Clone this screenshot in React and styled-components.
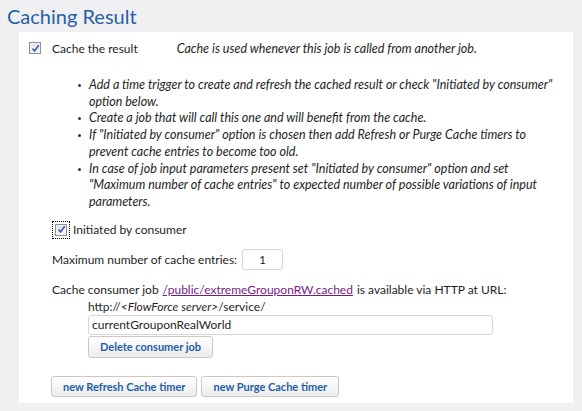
import React from "react";
import styled, { createGlobalStyle } from "styled-components";

const GlobalStyle = createGlobalStyle`
  html, body {
    margin: 0;
    padding: 0;
    background: #f0f0f2;
  }
  body {
    font-family: Lato, "Open Sans", sans-serif;
    font-size: 12px;
    color: #1e1e1e;
  }
`;

const Page = styled.div`
  width: 582px;
  height: 411px;
  padding: 0 9px 0 7px;
  box-sizing: border-box;
`;

const Title = styled.h2`
  margin: 0;
  padding-top: 3px;
  height: 29px;
  font-size: 20px;
  font-weight: 400;
  color: #2860a6;
  line-height: 26px;
`;

const Panel = styled.div`
  margin-left: 12px;
  background: #fff;
  height: 371px;
  box-sizing: border-box;
  padding: 9px 0 0 10px;
`;

const Row = styled.div`
  display: flex;
  align-items: center;
  height: ${(p) => p.h || 18}px;
  margin-left: ${(p) => p.indent || 0}px;
  margin-top: ${(p) => p.top || 0}px;
`;

const Box = styled.span`
  display: inline-flex;
  align-items: center;
  justify-content: center;
  width: 10px;
  height: 10px;
  border: 1px solid #8e8f8f;
  background: linear-gradient(#e2e2e2, #fafafa);
  box-shadow: inset 0 0 0 1px #f4f4f4;
  outline: ${(p) => (p.focused ? "1px dotted #000" : "none")};
  outline-offset: 2px;
  flex-shrink: 0;
`;

const Label = styled.span`
  margin-left: ${(p) => p.gap || 11}px;
`;

const Hint = styled.span`
  font-style: italic;
  font-size: 12.5px;
  margin-left: 39px;
`;

const List = styled.ul`
  margin: 22px 0 0 0;
  padding: 0 0 0 60px;
  width: 470px;
  font-style: italic;
  font-size: 12.5px;
  line-height: 16.7px;
  list-style: none;
`;

const Item = styled.li`
  position: relative;
  &::before {
    content: "";
    position: absolute;
    left: -11px;
    top: 7px;
    width: 3px;
    height: 3px;
    border-radius: 50%;
    background: #333;
  }
`;

const NumberField = styled.span`
  display: inline-flex;
  align-items: center;
  justify-content: center;
  width: 39px;
  height: 19px;
  margin-left: 5px;
  border: 1px solid #d6d6d6;
  border-radius: 3px;
`;

const Link = styled.a`
  color: #7b1a86;
  text-decoration: underline;
  margin: 0 4px;
`;

const Indented = styled.div`
  margin-left: 59px;
  line-height: 16px;
`;

const TextField = styled.div`
  width: 405px;
  height: 20px;
  border: 1px solid #d6d6d6;
  border-radius: 3px;
  display: flex;
  align-items: center;
  padding-left: 3px;
  box-sizing: border-box;
`;

const Button = styled.button`
  display: block;
  font-family: Lato, "Open Sans", sans-serif;
  font-size: 11px;
  font-weight: 700;
  color: #1f5ea8;
  height: ${(p) => p.h || 21}px;
  padding: 0 11px;
  margin-top: ${(p) => p.top || 0}px;
  border: 1px solid #c9c9c9;
  border-radius: 3px;
  background: linear-gradient(#ffffff, #ececec);
  margin-right: 4px;
`;

const Buttons = styled.div`
  display: flex;
  margin-top: 18px;
  margin-left: 22px;
`;

const Check = ({ focused }) => (
  <Box focused={focused}>
    <svg width="9" height="9" viewBox="0 0 9 9">
      <path d="M1.5 4.5 L3.5 7 L7.8 1.2" fill="none" stroke="#3a56b8" strokeWidth="1.6" />
    </svg>
  </Box>
);

export default function App() {
  return (
    <Page>
      <GlobalStyle />
      <Title>Caching Result</Title>
      <Panel>
        <Row h={14}>
          <Check />
          <Label>Cache the result</Label>
          <Hint>Cache is used whenever this job is called from another job.</Hint>
        </Row>
        <List>
          <Item>Add a time trigger to create and refresh the cached result or check "Initiated by consumer" option below.</Item>
          <Item>Create a job that will call this one and will benefit from the cache.</Item>
          <Item>If "Initiated by consumer" option is chosen then add Refresh or Purge Cache timers to prevent cache entries to become too old.</Item>
          <Item>In case of job input parameters present set "Initiated by consumer" option and set "Maximum number of cache entries" to expected number of possible variations of input parameters.</Item>
        </List>
        <Row h={14} indent={26} top={12}>
          <Check focused />
          <Label gap={6}>Initiated by consumer</Label>
        </Row>
        <Row h={21} indent={23} top={12}>
          Maximum number of cache entries:
          <NumberField>1</NumberField>
        </Row>
        <Row h={18} indent={23} top={11}>
          Cache consumer job<Link href="#">/public/extremeGrouponRW.cached</Link>is available via HTTP at URL:
        </Row>
        <Indented>
          <div>
            http://<i>&lt;FlowForce server&gt;</i>/service/
          </div>
          <TextField>currentGrouponRealWorld</TextField>
          <Button top={1} h={22}>Delete consumer job</Button>
        </Indented>
        <Buttons>
          <Button>new Refresh Cache timer</Button>
          <Button>new Purge Cache timer</Button>
        </Buttons>
      </Panel>
    </Page>
  );
}
